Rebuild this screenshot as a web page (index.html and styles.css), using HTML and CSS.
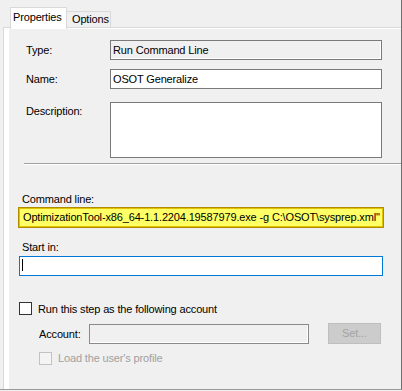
FILE: index.html
```html
<!DOCTYPE html>
<html>
<head>
<meta charset="utf-8">
<link rel="stylesheet" href="styles.css">
</head>
<body>
<div class="window">
  <div class="tabs">
    <div class="tab tab-active">Properties</div>
    <div class="tab">Options</div>
  </div>
  <div class="page">
    <div class="content">
      <div class="field-row">
        <span class="label">Type:</span>
        <div class="box box-readonly">Run Command Line</div>
      </div>
      <div class="field-row row-name">
        <span class="label">Name:</span>
        <div class="box">OSOT Generalize</div>
      </div>
      <div class="field-row row-desc">
        <span class="label">Description:</span>
        <div class="box box-area"></div>
      </div>
      <div class="separator"></div>
      <div class="lower">
        <div class="caption cmd-caption">Command line:</div>
        <div class="cmd-box">OptimizationTool-x86_64-1.1.2204.19587979.exe -g C:\OSOT\sysprep.xml"</div>
        <div class="caption start-caption">Start in:</div>
        <div class="start-box"><span class="caret"></span></div>
        <div class="check-row run-as">
          <span class="checkbox"></span>
          <span>Run this step as the following account</span>
        </div>
        <div class="account-row">
          <span class="acct-label">Account:</span>
          <div class="acct-box"></div>
          <div class="set-btn">Set...</div>
        </div>
        <div class="check-row load-profile">
          <span class="checkbox checkbox-disabled"></span>
          <span>Load the user's profile</span>
        </div>
      </div>
    </div>
  </div>
</div>
</body>
</html>
```
FILE: styles.css
```css
* { box-sizing: border-box; }

body {
  margin: 0;
  width: 402px;
  height: 391px;
  overflow: hidden;
  background: #f0f0f0;
  font-family: "Liberation Sans", Arial, sans-serif;
  font-size: 11px;
  letter-spacing: -0.15px;
  color: #000;
}

.window {
  width: 402px;
  height: 390px;
  border-right: 1px solid #6f6f6f;
  border-bottom: 1px solid #9a9a9a;
  display: flex;
  flex-direction: column;
}

.tabs {
  display: flex;
  align-items: flex-end;
  height: 27px;
  flex-shrink: 0;
  padding-left: 10px;
}

.tab {
  height: 16px;
  width: 44px;
  border: 1px solid #d9d9d9;
  border-left: none;
  border-bottom: none;
  padding-left: 5px;
  line-height: 14px;
  background: #f0f0f0;
  white-space: nowrap;
}

.tab-active {
  position: relative;
  z-index: 1;
  width: 57px;
  height: 22px;
  margin-bottom: -2px;
  border-left: 1px solid #d9d9d9;
  padding: 2px 0 0 2px;
  background: #fff;
}

.page {
  flex: 1;
  display: flex;
  margin-left: 3px;
  border-top: 1px solid #d9d9d9;
  border-left: 1px solid #d9d9d9;
  background: #fff;
  padding: 1px 0 0 5px;
}

.content {
  flex: 1;
  display: flex;
  flex-direction: column;
  background: #f0f0f0;
  padding-top: 11px;
}

.field-row {
  display: flex;
  align-items: center;
  padding-left: 17px;
}

.label {
  width: 84px;
  line-height: 18px;
}

.row-name { margin-top: 9px; }

.row-desc {
  margin-top: 13px;
  align-items: flex-start;
}

.box {
  width: 272px;
  height: 20px;
  border: 1px solid #7a7a7a;
  background: #fff;
  padding-left: 2px;
  line-height: 18px;
  white-space: nowrap;
}

.box-readonly {
  background: #f0f0f0;
  box-shadow: inset -1px -1px 0 #fff;
}

.box-area { height: 56px; }

.separator {
  margin: 5px 0 0 15px;
  height: 2px;
  border-top: 1px solid #a0a0a0;
  border-bottom: 1px solid #fff;
}

.lower {
  display: flex;
  flex-direction: column;
  align-items: flex-start;
  padding-left: 9px;
}

.caption {
  line-height: 14px;
  padding-left: 4px;
}

.cmd-caption { margin-top: 27px; }

.cmd-box {
  margin-top: 1px;
  width: 366px;
  height: 21px;
  border: 1px solid #b08d00;
  box-shadow: inset 0 0 0 1px #e2c200;
  background: #ffff66;
  padding-left: 4px;
  line-height: 19px;
  white-space: nowrap;
  overflow: hidden;
}

.start-caption { margin-top: 12px; }

.start-box {
  margin: 2px 0 0 1px;
  width: 364px;
  height: 20px;
  border: 1px solid #0078d7;
  background: #fff;
  padding: 2px 0 0 2px;
}

.caret {
  display: block;
  width: 1px;
  height: 12px;
  background: #000;
}

.check-row {
  display: flex;
  align-items: flex-start;
  line-height: 14px;
}

.run-as { margin: 26px 0 0 1px; }

.checkbox {
  width: 13px;
  height: 13px;
  border: 1px solid #333;
  background: #fff;
  margin-right: 6px;
}

.account-row {
  display: flex;
  align-items: flex-start;
  margin: 7px 0 0 21px;
}

.acct-label {
  width: 50px;
  margin-top: 4px;
  line-height: 14px;
}

.acct-box {
  width: 220px;
  height: 20px;
  margin-top: 1px;
  border: 1px solid #8a8a8a;
  background: #f0f0f0;
  box-shadow: inset -1px -1px 0 #fff;
}

.set-btn {
  margin-left: 19px;
  width: 53px;
  height: 21px;
  border: 1px solid #bfbfbf;
  background: #cccccc;
  color: #a3a3a3;
  text-align: center;
  line-height: 19px;
}

.load-profile {
  margin: 7px 0 0 21px;
  color: #a0a0a0;
}

.checkbox-disabled {
  margin-top: 1px;
  border-color: #c2c2c2;
  background: #f4f4f4;
}
```
